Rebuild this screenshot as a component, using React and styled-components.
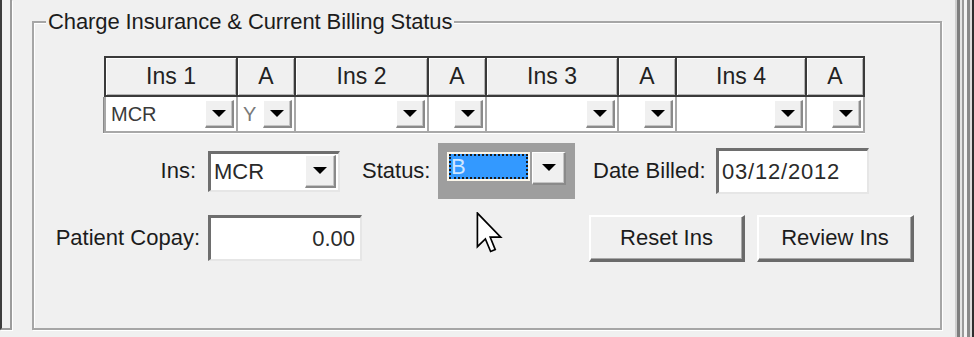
import React from 'react';
import styled, { createGlobalStyle } from 'styled-components';

const Global = createGlobalStyle`
  html, body { margin: 0; padding: 0; background: #f0f0f0; }
  body { font-family: "Liberation Sans", Arial, sans-serif; }
`;

const Page = styled.div`
  position: relative;
  display: flex;
  align-items: flex-start;
  width: 974px;
  height: 337px;
  overflow: hidden;
  background: #f0f0f0;
  font-family: "Liberation Sans", Arial, sans-serif;
  font-size: 22px;
  color: #1c1c1c;
`;

const LeftPanel = styled.div`
  box-sizing: border-box;
  flex: none;
  width: 12px;
  height: 330px;
  border-left: 2px solid #3c3c3c;
  border-right: 2px solid #9c9c9c;
  border-bottom: 2px solid #9c9c9c;
  box-shadow: 1px 1px 0 #fff;
`;

const Group = styled.fieldset`
  box-sizing: border-box;
  flex: none;
  min-width: 0;
  margin: 9px 0 0 20px;
  width: 910px;
  height: 321px;
  padding: 21px 0 0 0;
  border: 2px solid #a6a6a6;
  box-shadow: 1px 1px 0 #fff, inset 1px 1px 0 #fff;
`;

const Legend = styled.legend`
  margin-left: 12px;
  padding: 0 2px;
  line-height: 26px;
  font-size: 22px;
  letter-spacing: -0.1px;
  background: #f0f0f0;
`;

const RightEdge = styled.div`
  flex: none;
  margin-left: 13px;
  width: 20px;
  height: 337px;
  background: linear-gradient(
    to right,
    #cfcfcf 0 2px,
    #7e7e7e 2px 5px,
    #e4e4e4 5px 7px,
    #9a9a9a 7px 9px,
    #f4f4f4 9px 12px,
    #8a8a8a 12px 15px,
    #dcdcdc 15px 17px,
    #2e2e2e 17px 20px
  );
`;

const cols = '130px 56px 131px 56px 130px 56px 128px 56px';

const Table = styled.div`
  margin-left: 70px;
  width: 761px;
`;

const HeaderRow = styled.div`
  box-sizing: border-box;
  display: grid;
  grid-template-columns: ${cols};
  column-gap: 2px;
  height: 41px;
  padding: 2px;
  background: #3a3a3a;
`;

const HeaderCell = styled.div`
  display: flex;
  align-items: center;
  justify-content: center;
  background: #f0f0f0;
  box-shadow: inset 1px 1px 0 #fff, inset -1px -1px 0 #b4b4b4;
  font-size: 23px;
  color: #222;
`;

const DataRow = styled.div`
  box-sizing: border-box;
  display: grid;
  grid-template-columns: ${cols};
  column-gap: 2px;
  height: 36px;
  padding: 0 2px 2px 2px;
  background: #a8a8a8;
  border-left: 1px solid #8a8a8a;
  margin-left: -1px;
  box-shadow: 0 1px 0 #fff;
`;

const DataCell = styled.div`
  display: flex;
  align-items: center;
  justify-content: space-between;
  padding: 0 2px 0 5px;
  background: #fff;
  font-size: 20px;
  color: ${p => (p.$dim ? '#7a7a7a' : '#3a3a3a')};
`;

const DropBtn = styled.div`
  box-sizing: border-box;
  flex: none;
  display: flex;
  align-items: center;
  justify-content: center;
  width: ${p => p.$w || 29}px;
  height: ${p => p.$h || 28}px;
  background: #f0f0f0;
  border-top: 1px solid #fff;
  border-left: 1px solid #fff;
  border-right: 2px solid #8a8a8a;
  border-bottom: 2px solid #8a8a8a;
  box-shadow: inset -1px -1px 0 #c4c4c4;
`;

const Arrow = () => (
  <svg width="14" height="8" viewBox="0 0 14 8">
    <polygon points="0,0 14,0 7,7" fill="#000" />
  </svg>
);

const Row = styled.div`
  display: flex;
  align-items: center;
  height: ${p => p.$h}px;
  margin-top: ${p => p.$mt}px;
`;

const Label = styled.div`
  flex: none;
  box-sizing: border-box;
  width: ${p => p.$w}px;
  margin-left: ${p => p.$ml || 0}px;
  text-align: ${p => p.$align || 'left'};
  font-size: 22px;
  color: #1c1c1c;
  white-space: nowrap;
`;

const Sunken = styled.div`
  box-sizing: border-box;
  flex: none;
  display: flex;
  align-items: center;
  justify-content: ${p => (p.$right ? 'flex-end' : 'space-between')};
  width: ${p => p.$w}px;
  height: ${p => p.$h}px;
  margin-left: ${p => p.$ml || 0}px;
  padding: ${p => (p.$right ? '0 5px 0 0' : '0 2px 0 3px')};
  background: #fff;
  border-top: 3px solid #6e6e6e;
  border-left: 3px solid #6e6e6e;
  border-right: 2px solid #e6e6e6;
  border-bottom: 2px solid #e6e6e6;
  font-size: 22px;
  letter-spacing: ${p => p.$ls || 0}px;
  color: #2a2a2a;
`;

const FocusBox = styled.div`
  box-sizing: border-box;
  flex: none;
  width: 137px;
  height: 56px;
  margin-left: 6px;
  padding: 9px;
  background: #9e9e9e;
`;

const FocusCombo = styled.div`
  display: flex;
  align-items: flex-start;
  gap: 2px;
`;

const Selected = styled.div`
  box-sizing: border-box;
  flex: 1;
  height: 29px;
  padding-left: 2px;
  background: #3399ff;
  border: 2px solid #fbf6ea;
  outline: 2px dotted #1a1a1a;
  outline-offset: -4px;
  font-size: 22px;
  line-height: 25px;
  color: #cfe6ff;
`;

const PushButton = styled.button`
  box-sizing: border-box;
  flex: none;
  width: ${p => p.$w}px;
  height: 47px;
  margin-left: ${p => p.$ml || 0}px;
  padding: 0;
  background: #f0f0f0;
  border-top: 2px solid #fff;
  border-left: 2px solid #fff;
  border-right: 3px solid #6a6a6a;
  border-bottom: 3px solid #6a6a6a;
  box-shadow: inset -1px -1px 0 #a8a8a8;
  font-family: "Liberation Sans", Arial, sans-serif;
  font-size: 22px;
  color: #1c1c1c;
`;

const Cursor = styled.svg`
  position: absolute;
  left: 476px;
  top: 212px;
`;

export default function App() {
  const heads = ['Ins 1', 'A', 'Ins 2', 'A', 'Ins 3', 'A', 'Ins 4', 'A'];
  const vals = ['MCR', 'Y', '', '', '', '', '', ''];
  return (
    <Page>
      <Global />
      <LeftPanel />
      <Group>
        <Legend>Charge Insurance &amp; Current Billing Status</Legend>
        <Table>
          <HeaderRow>
            {heads.map((h, i) => (
              <HeaderCell key={i}>{h}</HeaderCell>
            ))}
          </HeaderRow>
          <DataRow>
            {vals.map((v, i) => (
              <DataCell key={i} $dim={v === 'Y'}>
                <span>{v}</span>
                <DropBtn>
                  <Arrow />
                </DropBtn>
              </DataCell>
            ))}
          </DataRow>
        </Table>
        <Row $h={56} $mt={10}>
          <Label $w={162} $align="right">Ins:</Label>
          <Sunken $w={132} $h={41} $ml={12}>
            <span>MCR</span>
            <DropBtn $w={31} $h={33}>
              <Arrow />
            </DropBtn>
          </Sunken>
          <Label $w={70} $ml={22}>Status:</Label>
          <FocusBox>
            <FocusCombo>
              <Selected>B</Selected>
              <DropBtn $w={34} $h={33}>
                <Arrow />
              </DropBtn>
            </FocusCombo>
          </FocusBox>
          <Label $w={117} $ml={18}>Date Billed:</Label>
          <Sunken $w={153} $h={46} $ml={6} $ls={0.8}>
            <span>03/12/2012</span>
          </Sunken>
        </Row>
        <Row $h={48} $mt={15}>
          <Label $w={166} $align="right">Patient Copay:</Label>
          <Sunken $w={154} $h={46} $ml={8} $right>
            <span>0.00</span>
          </Sunken>
          <PushButton $w={156} $ml={227}>Reset Ins</PushButton>
          <PushButton $w={157} $ml={12}>Review Ins</PushButton>
        </Row>
      </Group>
      <RightEdge />
      <Cursor width="28" height="42" viewBox="0 0 13 20">
        <path
          d="M0.5 0.5 L0.5 16.5 L4.3 12.8 L6.8 18.8 L9 17.9 L6.6 12 L11.6 12 Z"
          fill="#fff"
          stroke="#000"
          strokeWidth="0.8"
          strokeLinejoin="miter"
        />
      </Cursor>
    </Page>
  );
}
